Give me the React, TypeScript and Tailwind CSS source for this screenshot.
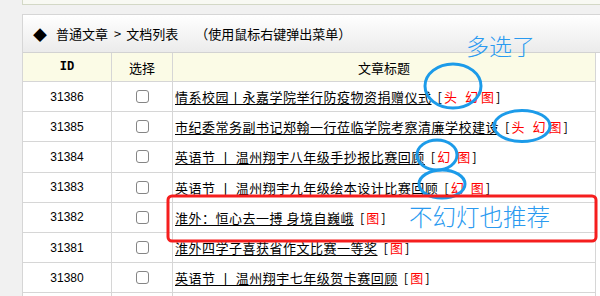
const rows = [
  { id: "31386", title: "情系校园丨永嘉学院举行防疫物资捐赠仪式", tags: ["头", "幻", "图"] },
  { id: "31385", title: "市纪委常务副书记郑翰一行莅临学院考察清廉学校建设", tags: ["头", "幻", "图"] },
  { id: "31384", title: "英语节 丨 温州翔宇八年级手抄报比赛回顾", tags: ["幻", "图"] },
  { id: "31383", title: "英语节 丨 温州翔宇九年级绘本设计比赛回顾", tags: ["幻", "图"] },
  { id: "31382", title: "淮外：恒心去一搏 身境自巍峨", tags: ["图"] },
  { id: "31381", title: "淮外四学子喜获省作文比赛一等奖", tags: ["图"] },
  { id: "31380", title: "英语节 丨 温州翔宇七年级贺卡赛回顾", tags: ["图"] },
]

const font = { fontFamily: '"Noto Sans CJK SC", "Liberation Sans", sans-serif' }

function tagGap(tags: string[], i: number) {
  if (i === 0) return "ml-[2px]"
  if (tags[i - 1] === "头") return "ml-[8px]"
  return tags.length === 3 ? "ml-[3px]" : "ml-[7px]"
}

export default function App() {
  return (
    <div className="relative w-[600px] h-[296px] overflow-hidden bg-[#f1f1f1] text-[13px] text-black" style={font}>
      <div className="pl-[22px]">
        <div className="h-[5px] border-l border-b border-[#d3d8c6] bg-[#f8f9f3]" />

        <div className="mt-[9px] w-[600px] border-l border-t border-[#d6d6d6] bg-white">
          <div className="flex h-[38px] items-center border-b border-[#d2d2d2] bg-gradient-to-b from-white to-[#ebebeb] pl-[10px] leading-none">
            <span className="text-[14px]">◆</span>
            <span className="ml-[9px]">普通文章</span>
            <span className="ml-[6px]">&gt;</span>
            <span className="ml-[5px]">文档列表</span>
            <span className="ml-[17px]">（使用鼠标右键弹出菜单）</span>
          </div>

          <div className="w-[573px]">
            <div className="flex h-[29px] border-b border-[#d6d6d6] bg-[#fbfbe6] leading-none">
              <div className="flex w-[89px] items-center justify-center border-r border-[#d6d6d6] text-[12px] font-bold" style={{ fontFamily: '"Liberation Mono", monospace' }}>
                ID
              </div>
              <div className="flex w-[61px] items-center justify-center border-r border-[#d6d6d6]">选择</div>
              <div className="flex flex-1 items-center justify-center border-r border-[#d6d6d6]">文章标题</div>
            </div>

            {rows.map((r) => (
              <div key={r.id} className="box-border flex h-[30.2px] border-b border-[#d6d6d6] leading-none">
                <div className="flex w-[89px] items-center justify-center border-r border-[#d6d6d6] text-[12px]" style={{ fontFamily: '"Liberation Sans", sans-serif' }}>
                  {r.id}
                </div>
                <div className="flex w-[61px] items-center justify-center border-r border-[#d6d6d6]">
                  <span className="h-[13px] w-[13px] rounded-[3px] border border-[#858585] bg-white" />
                </div>
                <div className="flex flex-1 items-center border-r border-[#d6d6d6] pl-[2px] whitespace-nowrap">
                  <span className="underline underline-offset-2 tracking-[0.5px]">{r.title}</span>
                  <span className="ml-[6px]">[</span>
                  {r.tags.map((t, i) => (
                    <span key={t} className={"text-[#ff0000] " + tagGap(r.tags, i)}>
                      {t}
                    </span>
                  ))}
                  <span className="ml-[2px]">]</span>
                </div>
              </div>
            ))}

            <div className="flex h-[30px] leading-none">
              <div className="w-[89px] border-r border-[#d6d6d6]" />
              <div className="w-[61px] border-r border-[#d6d6d6]" />
              <div className="flex-1 border-r border-[#d6d6d6]" />
            </div>
          </div>
        </div>
      </div>

      <svg className="absolute left-0 top-0" width="600" height="296" fill="none">
        <ellipse cx="453" cy="86" rx="28" ry="22" stroke="#1c9be9" strokeWidth="3" />
        <ellipse cx="522" cy="126" rx="28" ry="15.5" stroke="#1c9be9" strokeWidth="3" />
        <ellipse cx="437" cy="155" rx="20" ry="15" stroke="#1c9be9" strokeWidth="3" />
        <ellipse cx="442" cy="184" rx="23" ry="14" stroke="#1c9be9" strokeWidth="3" />
        <rect x="168" y="196" width="428" height="45" rx="4" stroke="#f51e1e" strokeWidth="3" />
      </svg>

      <span className="absolute left-[466px] top-[34px] text-[23px] leading-none font-light text-[#2a9af0]">多选了</span>
      <span className="absolute left-[409px] top-[205px] text-[23.5px] leading-none font-light text-[#2a9af0]">不幻灯也推荐</span>
    </div>
  )
}
